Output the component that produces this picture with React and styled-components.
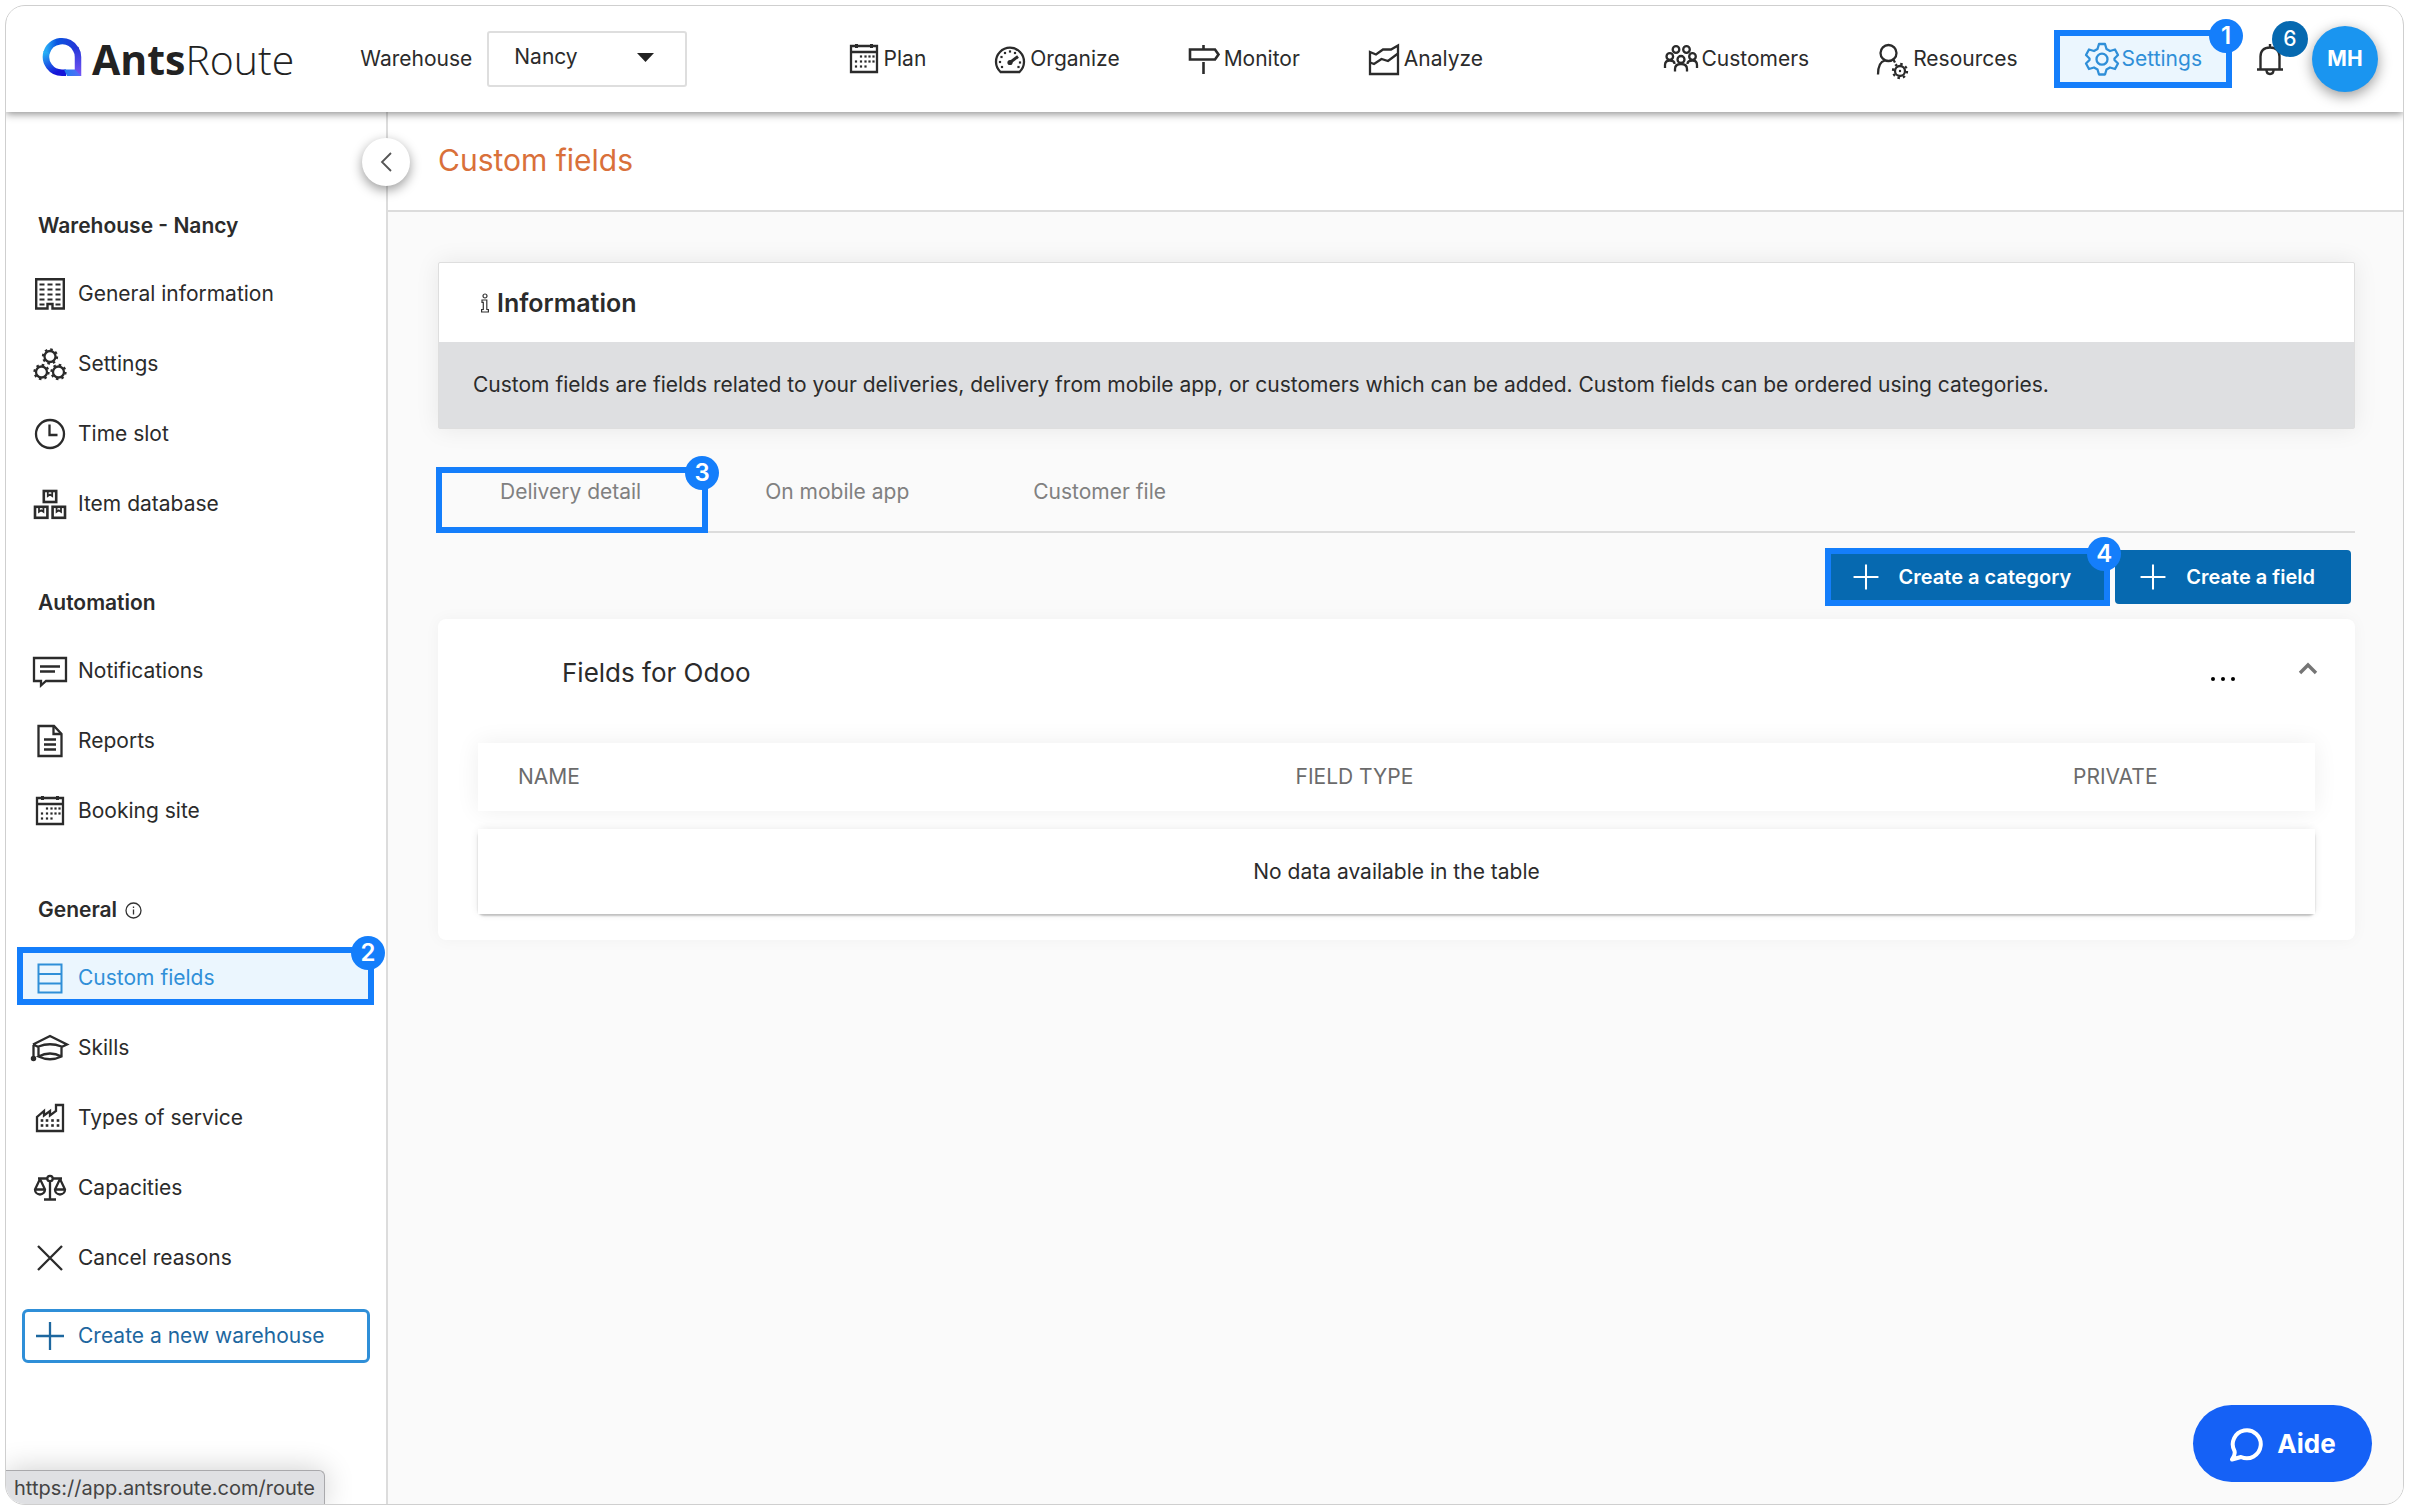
import React from "react";
import styled, { createGlobalStyle, css } from "styled-components";

const colors = {
  ink: "#2b2b2b",
  grey: "#808080",
  line: "#dcdcdc",
  frame: "#cfcfcf",
  step: "#147efb",
  brand: "#0669b0",
  active: "#2f8fd8",
  activeBg: "#ebf6fe",
  avatar: "#1a95f0",
  title: "#d9703a",
};

const GlobalStyle = createGlobalStyle`
  *, *::before, *::after { box-sizing: border-box; }
  body {
    margin: 0;
    background: #fff;
    color: ${colors.ink};
    font-family: Inter, "Open Sans", sans-serif;
    font-size: 21px;
    line-height: 28px;
  }
  button, select { font: inherit; color: inherit; }
  a { color: inherit; text-decoration: none; }
  h1, h2, p, ul { margin: 0; padding: 0; }
`;

/* ---------- Frame ---------- */

const Frame = styled.div`
  position: relative;
  display: flex;
  flex-direction: column;
  min-height: calc(100vh - 10px);
  margin: 5px;
  border: 1px solid ${colors.frame};
  border-radius: 20px;
  overflow: hidden;
`;

const Body = styled.div`
  display: flex;
  flex: 1;
`;

/* ---------- Step markers ---------- */

const StepAnchor = styled.div`
  position: relative;
`;

const StepOutline = styled.span`
  position: absolute;
  inset: ${(p) => p.$inset || "0"};
  border: 6px solid ${colors.step};
  pointer-events: none;
`;

const StepBadge = styled.span`
  position: absolute;
  top: -17px;
  right: -17px;
  display: flex;
  align-items: center;
  justify-content: center;
  width: 34px;
  height: 34px;
  border-radius: 50%;
  background: ${colors.step};
  color: #fff;
  font-size: 24px;
  font-weight: 600;
`;

const Step = ({ number, inset }) => (
  <StepOutline $inset={inset}>
    <StepBadge>{number}</StepBadge>
  </StepOutline>
);

/* ---------- Icons ---------- */

const Svg = styled.svg`
  flex: none;
  width: 36px;
  height: 36px;
  overflow: visible;
  fill: none;
  stroke: currentColor;
  stroke-width: ${(p) => p.$weight || 2.3};
`;

const Icon = ({ children, weight }) => (
  <Svg viewBox="0 0 36 36" $weight={weight} aria-hidden="true">
    {children}
  </Svg>
);

const Dots = ({ points, size = 2.2 }) =>
  points.map(([x, y]) => (
    <rect key={`${x}-${y}`} x={x - size / 2} y={y - size / 2} width={size} height={size} fill="currentColor" stroke="none" />
  ));

const CalendarIcon = () => (
  <Icon>
    <path d="M5 5H31V31H5ZM5 11H31" />
    <path d="M10.5 3V7M25.5 3V7" strokeWidth="3" />
    <Dots
      points={[
        [15, 15.5], [19.5, 15.5], [23.5, 15.5], [27.5, 15.5],
        [10, 20.5], [15, 20.5], [19.5, 20.5], [23.5, 20.5], [27.5, 20.5],
        [10, 25.5], [15, 25.5], [19.5, 25.5],
      ]}
    />
  </Icon>
);

const GaugeIcon = () => (
  <Icon>
    <path d="M8.500 31H27.500A14 14 0 1 0 8.500 31Z" />
    <circle cx="18" cy="21.500" r="2.600" fill="currentColor" stroke="none" />
    <path d="M18 21.500L26 15.500" strokeWidth="3" />
    <Dots points={[[8, 21], [9.5, 16], [13, 12], [18, 10.500], [23, 12], [28, 21.500], [10, 26], [26.500, 26]]} />
  </Icon>
);

const SignpostIcon = () => (
  <Icon weight={2.6}>
    <path d="M4 8.500H29L32.500 13.500L29 18.500H4ZM17.500 4V8.500M17.500 21V33" />
  </Icon>
);

const AreaChartIcon = () => (
  <Icon>
    <path d="M4 11L10 13.500L17 8.500H25L32 4.500V33H4Z" />
    <path d="M4 21.500L8 23L15.500 18L22 20L32 12.500" />
  </Icon>
);

const PeopleIcon = () => (
  <Icon>
    <circle cx="13" cy="8.500" r="3.300" />
    <circle cx="23.500" cy="8.500" r="3.300" />
    <circle cx="6.800" cy="15.500" r="3.300" />
    <circle cx="18" cy="18.500" r="3.500" />
    <circle cx="29.500" cy="15.500" r="3.300" />
    <path d="M2 27V24Q2 19.500 6.800 19.500Q11.500 19.500 11.500 23M34 27V24Q34 19.500 29.500 19.500Q24.500 19.500 24.500 23M12 30.500V28Q12 23 18 23Q24 23 24 28V30.500" />
  </Icon>
);

const PersonGearIcon = () => (
  <Icon>
    <circle cx="13.500" cy="12" r="8" />
    <path d="M3 33.500Q3 21 10 19.500M18 18L20 21.500" />
    <circle cx="25" cy="30" r="5" />
    <circle cx="25" cy="30" r="7" strokeDasharray="2.5 3" />
    <circle cx="25" cy="30" r="1.200" fill="currentColor" stroke="none" />
  </Icon>
);

const CogIcon = () => (
  <Icon>
    <path
      strokeLinejoin="round"
      d="M15 3H21L22.500 8L26 10L31 8.500L34 14L30.500 17.500V19L34 22.500L31 28L26 26.500L22.500 28.500L21 33.500H15L13.500 28.500L10 26.500L5 28L2 22.500L5.500 19V17.500L2 14L5 8.500L10 10L13.500 8Z"
    />
    <circle cx="18" cy="18.200" r="5.500" />
  </Icon>
);

const BellIcon = () => (
  <Icon weight={2.4}>
    <path d="M5 28.500H31M8.500 28V15.500Q8.500 6.500 18 6.500Q27.500 6.500 27.500 15.500V28M18 6.500V3" />
    <path d="M14.500 29Q14.500 33 18 33Q21.500 33 21.500 29" />
  </Icon>
);

const BuildingIcon = () => (
  <Icon weight={2.4}>
    <path d="M4.200 3.200H31.800V32.500H20.500V28H15.500V32.500H4.200Z" />
    <path
      strokeWidth="2"
      d="M7.500 8.500H12.500M15.500 8.500H20.500M23.500 8.500H28.500M7.500 13.500H12.500M15.500 13.500H20.500M23.500 13.500H28.500M7.500 18.500H12.500M15.500 18.500H20.500M23.500 18.500H28.500M7.500 23.500H12.500M15.500 23.500H20.500M23.500 23.500H28.500M7.500 28.500H12.500M23.500 28.500H28.500"
    />
  </Icon>
);

const Gear = ({ x, y }) => (
  <>
    <circle cx={x} cy={y} r="5.500" />
    <circle cx={x} cy={y} r="7" strokeDasharray="2.5 3" />
  </>
);

const GearsIcon = () => (
  <Icon>
    <Gear x={18} y={10.5} />
    <Gear x={9.5} y={26} />
    <Gear x={26.5} y={26} />
  </Icon>
);

const ClockIcon = () => (
  <Icon>
    <circle cx="18" cy="18" r="14" />
    <path d="M17.500 8.500V19H25.500" />
  </Icon>
);

const Crate = ({ x, y }) => (
  <>
    <rect x={x} y={y} width="12.400" height="11" strokeWidth="2.600" />
    <path d={`M${x + 4} ${y}V${y + 5}L${x + 6.2} ${y + 3.5}L${x + 8.4} ${y + 5}V${y}`} strokeWidth="1.800" />
  </>
);

const CratesIcon = () => (
  <Icon>
    <Crate x={11.8} y={5} />
    <Crate x={3} y={20.8} />
    <Crate x={20.6} y={20.8} />
  </Icon>
);

const MessageIcon = () => (
  <Icon>
    <path d="M2 5H34V28H14L9 32.500V28H2Z" />
    <path d="M8 13.500H28M8 18.500H23" />
  </Icon>
);

const ReportIcon = () => (
  <Icon>
    <path d="M6.500 3H22L29.500 11V33H6.500Z" />
    <path d="M21.500 3V11H29.500M12 16.500H24M12 21.500H24M12 26.500H24" />
  </Icon>
);

const FieldsIcon = () => (
  <Icon weight={2}>
    <path d="M6.500 4.500H29.500V32.500H6.500ZM6.500 14H29.500M6.500 23.500H29.500" />
  </Icon>
);

const CapIcon = () => (
  <Icon>
    <path d="M1 14.500L18 6L35 14.500L29.500 17M6.500 17L1 14.500M6.500 26.500V16.500Q18 12 29.500 16.500V26.500Q18 32 6.500 26.500Q18 20.500 29.500 26.500M1.500 15V28" />
    <circle cx="1.500" cy="28.500" r="1.600" fill="currentColor" />
  </Icon>
);

const FactoryIcon = () => (
  <Icon>
    <path d="M5 31V17L12 11V15.500L18 11V15.500L24 11V5H31V31Z" />
    <Dots
      points={[
        [10, 20.5], [15, 20.5], [20.5, 20.5], [26, 20.5],
        [10, 25.5], [15, 25.5], [20.500, 25.5], [26, 25.5],
      ]}
      size={2.6}
    />
  </Icon>
);

const ScalesIcon = () => (
  <Icon>
    <path d="M6 8.500H15M21 8.500H30M18 11.500V29.500M12 29.500H24" />
    <circle cx="18" cy="8.500" r="2.700" />
    <path d="M8 9L3 19.500A5 5 0 0 0 13 19.500L8 9M28 9L23 19.500A5 5 0 0 0 33 19.500L28 9M3 19.500H13M23 19.500H33" />
  </Icon>
);

const CrossIcon = () => (
  <Icon>
    <path d="M6 6L30 30M30 6L6 30" />
  </Icon>
);

const PlusIcon = () => (
  <Icon>
    <path d="M4 18H32M18 4V32" />
  </Icon>
);

/* ---------- Header ---------- */

const TopBar = styled.header`
  position: relative;
  z-index: 2;
  display: flex;
  align-items: center;
  justify-content: space-between;
  height: 106px;
  padding: 0 25px 0 36px;
  background: #fff;
  box-shadow: 0 2px 8px rgba(0, 0, 0, 0.45);
`;

const TopGroup = styled.div`
  display: flex;
  align-items: center;
`;

const Logo = styled.a`
  display: flex;
  align-items: center;
  gap: 10px;
  margin-right: 66px;
  color: #222;
  font-family: "Open Sans", "Noto Sans", sans-serif;
  font-size: 41px;
  font-weight: 300;
  line-height: 56px;

  svg {
    width: 40px;
    height: 40px;
    margin-bottom: 4px;
  }

  strong {
    font-weight: 700;
  }
`;

const WarehouseLabel = styled.label`
  margin-right: 15px;
`;

const SelectBox = styled.div`
  position: relative;

  select {
    width: 200px;
    height: 56px;
    padding: 0 25px 4px;
    border: 2px solid #dedede;
    border-radius: 3px;
    background: #fff;
    appearance: none;
  }

  svg {
    position: absolute;
    top: 22px;
    right: 33px;
    pointer-events: none;
  }
`;

const Nav = styled.nav`
  display: flex;
  gap: 6px;
`;

const CenterNav = styled(Nav)`
  margin-left: 8px;
`;

const NavLink = styled.a`
  position: relative;
  display: flex;
  align-items: center;
  gap: 2px;
  height: 58px;
  padding: 0 30px;
  ${(p) =>
    p.$active &&
    css`
      background: ${colors.activeBg};
      color: ${colors.active};
    `}
`;

const BellButton = styled.button`
  position: relative;
  display: flex;
  margin: 0 24px 0 20px;
  padding: 0;
  border: 0;
  background: none;
`;

const Count = styled.span`
  position: absolute;
  top: -20px;
  right: -20px;
  width: 36px;
  height: 36px;
  border-radius: 50%;
  background: ${colors.brand};
  color: #fff;
  font-weight: 500;
  line-height: 36px;
  text-align: center;
`;

const Avatar = styled.button`
  width: 66px;
  height: 66px;
  padding: 0;
  border: 0;
  border-radius: 50%;
  background: ${colors.avatar};
  box-shadow: 0 4px 14px rgba(0, 0, 0, 0.4);
  color: #fff;
  font-weight: 700;
`;

/* ---------- Sidebar ---------- */

const Sidebar = styled.aside`
  position: relative;
  flex: none;
  width: 382px;
  padding: 81px 16px 110px;
  border-right: 2px solid ${colors.line};
  background: #fff;
`;

const Collapse = styled.button`
  position: absolute;
  z-index: 1;
  top: 26px;
  right: -24px;
  display: flex;
  align-items: center;
  justify-content: center;
  width: 48px;
  height: 48px;
  padding: 0;
  border: 0;
  border-radius: 50%;
  background: #fff;
  box-shadow: 0 4px 12px rgba(0, 0, 0, 0.4);
`;

const Section = styled.section`
  & + & {
    margin-top: 31px;
  }
`;

const SectionTitle = styled.h2`
  display: flex;
  align-items: center;
  gap: 8px;
  height: 66px;
  padding-left: 16px;
  font-size: 21px;
  font-weight: 600;
  line-height: 28px;
`;

const MenuList = styled.ul`
  list-style: none;
`;

const MenuRow = styled.li`
  display: flex;
  align-items: center;
  height: 70px;
`;

const MenuLink = styled.a`
  position: relative;
  display: flex;
  flex: 1;
  align-items: center;
  gap: 10px;
  height: 52px;
  padding-left: 10px;
  ${(p) =>
    p.$active &&
    css`
      background: ${colors.activeBg};
      color: ${colors.active};
    `}
`;

const NewWarehouse = styled.button`
  display: flex;
  align-items: center;
  gap: 10px;
  width: 100%;
  height: 54px;
  margin-top: 16px;
  padding: 0 7px;
  border: 3px solid ${colors.active};
  border-radius: 6px;
  background: #fff;
  color: #1d679f;
`;

/* ---------- Main ---------- */

const Main = styled.main`
  flex: 1;
  min-width: 0;
  background: #fafafa;
`;

const PageHead = styled.div`
  display: flex;
  align-items: center;
  height: 100px;
  padding: 0 50px 2px;
  border-bottom: 2px solid ${colors.line};
  background: #fff;
`;

const PageTitle = styled.h1`
  color: ${colors.title};
  font-size: 30px;
  font-weight: 400;
  line-height: 40px;
`;

const Content = styled.div`
  padding: 50px 48px 60px 50px;
`;

const InfoPanel = styled.section`
  border: 1px solid #dedede;
  border-radius: 2px;
  background: #fff;
  box-shadow: 0 0 24px rgba(0, 0, 0, 0.08);

  h2 {
    display: flex;
    align-items: center;
    gap: 8px;
    height: 79px;
    padding-left: 42px;
    font-size: 25px;
    font-weight: 600;
  }

  p {
    padding: 29px 34px;
    background: #dedfe1;
  }
`;

const Tabs = styled.div`
  display: flex;
  height: 82px;
  margin-top: 22px;
  border-bottom: 2px solid ${colors.line};
`;

const Tab = styled.button`
  position: relative;
  height: 82px;
  padding: 0 62px;
  border: 0;
  background: none;
  color: ${colors.grey};
`;

const Actions = styled.div`
  display: flex;
  justify-content: flex-end;
  gap: 8px;
  margin-top: 17px;
  padding-right: 4px;
`;

const ActionButton = styled.button`
  display: flex;
  align-items: center;
  gap: 17px;
  height: 54px;
  padding: 0 36px 0 22px;
  border: 0;
  border-radius: 4px;
  background: ${colors.brand};
  color: #fff;
  font-size: 20px;
  font-weight: 600;

  svg {
    width: 32px;
    height: 32px;
  }
`;

const Card = styled.section`
  margin-top: 15px;
  padding: 0 40px 8px;
  border-radius: 8px;
  background: #fff;
  box-shadow: 0 0 16px rgba(0, 0, 0, 0.04);
`;

const CardHead = styled.div`
  display: flex;
  align-items: center;
  height: 106px;
  padding: 2px 0 0 84px;

  h2 {
    flex: 1;
    font-size: 26px;
    font-weight: 400;
    line-height: 32px;
  }
`;

const CardTools = styled.div`
  display: flex;
  gap: 45px;
  margin-right: -13px;
`;

const IconButton = styled.button`
  display: flex;
  align-items: ${(p) => p.$align};
  justify-content: center;
  width: 40px;
  height: 24px;
  padding: 1px 0 4px;
  border: 0;
  background: none;
`;

const Table = styled.table`
  width: 100%;
  border-spacing: 0 18px;
  table-layout: fixed;

  th {
    height: 68px;
    padding: 0 40px;
    color: #6b6b6b;
    font-weight: 400;
    text-align: left;
  }

  th:last-child {
    width: 282px;
  }

  thead tr {
    box-shadow: 0 0 24px rgba(0, 0, 0, 0.07);
    background: #fff;
  }

  tbody tr {
    border-radius: 6px;
    box-shadow: 0 2px 2px rgba(0, 0, 0, 0.22), 0 0 8px rgba(0, 0, 0, 0.09);
    background: #fff;
  }

  td {
    height: 85px;
    text-align: center;
  }
`;

/* ---------- Overlays ---------- */

const HelpButton = styled.button`
  position: absolute;
  right: 31px;
  bottom: 22px;
  display: flex;
  align-items: center;
  justify-content: center;
  gap: 14px;
  width: 179px;
  height: 77px;
  border: 0;
  border-radius: 39px;
  background: #1561f6;
  color: #fff;
  font-size: 26px;
  font-weight: 700;
`;

const StatusUrl = styled.div`
  position: absolute;
  left: 0;
  bottom: 0;
  width: 319px;
  height: 34px;
  padding-left: 8px;
  border: 1px solid #a9a9ac;
  border-width: 1px 1px 0 0;
  border-radius: 0 6px 0 0;
  background: #dfe0e3;
  box-shadow: 0 0 30px rgba(0, 0, 0, 0.2);
  color: #444;
  font-size: 20px;
  line-height: 34px;
`;

const mainNav = [
  ["Plan", CalendarIcon],
  ["Organize", GaugeIcon],
  ["Monitor", SignpostIcon],
  ["Analyze", AreaChartIcon],
];

const sections = [
  {
    title: "Warehouse - Nancy",
    items: [
      ["General information", BuildingIcon],
      ["Settings", GearsIcon],
      ["Time slot", ClockIcon],
      ["Item database", CratesIcon],
    ],
  },
  {
    title: "Automation",
    items: [
      ["Notifications", MessageIcon],
      ["Reports", ReportIcon],
      ["Booking site", CalendarIcon],
    ],
  },
  {
    title: "General",
    info: true,
    items: [
      ["Custom fields", FieldsIcon],
      ["Skills", CapIcon],
      ["Types of service", FactoryIcon],
      ["Capacities", ScalesIcon],
      ["Cancel reasons", CrossIcon],
    ],
  },
];

const LogoMark = () => (
  <svg viewBox="0 0 40 40" fill="none" strokeWidth="6.5" aria-hidden="true">
    <defs>
      <linearGradient id="markTop" x1="0" y1="0" x2="1" y2="0">
        <stop offset="0" stopColor="#27a8f5" />
        <stop offset="0.35" stopColor="#0b55e0" />
        <stop offset="1" stopColor="#2336d8" />
      </linearGradient>
      <linearGradient id="markRight" gradientUnits="userSpaceOnUse" x1="36" y1="10" x2="36" y2="39">
        <stop offset="0" stopColor="#2336d8" />
        <stop offset="1" stopColor="#7a55f5" />
      </linearGradient>
      <linearGradient id="markLeft" x1="0" y1="0" x2="0.5" y2="1">
        <stop offset="0" stopColor="#27b0f5" />
        <stop offset="1" stopColor="#1515d8" />
      </linearGradient>
      <linearGradient id="markFoot" x1="0" y1="0" x2="1" y2="0">
        <stop offset="0" stopColor="#1d7df0" />
        <stop offset="1" stopColor="#5a6cf8" />
      </linearGradient>
    </defs>
    <path d="M4.500 16A16 16 0 0 1 34 12.500" stroke="url(#markTop)" />
    <path d="M33.500 11.500Q36 15.500 36 20V39" stroke="url(#markRight)" />
    <path d="M4.700 15A16 16 0 0 0 20 35.700H24" stroke="url(#markLeft)" />
    <path d="M22 32.500H33L39.200 39H25Z" fill="url(#markFoot)" />
  </svg>
);

export default function App() {
  return (
    <>
      <GlobalStyle />
      <Frame>
        <TopBar>
          <TopGroup>
            <Logo href="#home">
              <LogoMark />
              <span>
                <strong>Ants</strong>Route
              </span>
            </Logo>
            <WarehouseLabel htmlFor="warehouse">Warehouse</WarehouseLabel>
            <SelectBox>
              <select id="warehouse" defaultValue="Nancy">
                <option>Nancy</option>
              </select>
              <svg width="17" height="9" viewBox="0 0 17 9" aria-hidden="true">
                <path d="M0 0H17L8.500 9Z" fill="#222" />
              </svg>
            </SelectBox>
          </TopGroup>
          <CenterNav>
            {mainNav.map(([label, NavIcon]) => (
              <NavLink key={label} href={`#${label}`}>
                <NavIcon />
                {label}
              </NavLink>
            ))}
          </CenterNav>
          <TopGroup>
            <Nav>
              <NavLink href="#customers">
                <PeopleIcon />
                Customers
              </NavLink>
              <NavLink href="#resources">
                <PersonGearIcon />
                Resources
              </NavLink>
              <NavLink href="#settings" $active>
                <CogIcon />
                Settings
                <Step number="1" />
              </NavLink>
            </Nav>
            <BellButton aria-label="Alerts">
              <BellIcon />
              <Count>6</Count>
            </BellButton>
            <Avatar>MH</Avatar>
          </TopGroup>
        </TopBar>

        <Body>
          <Sidebar>
            <Collapse aria-label="Collapse menu">
              <svg width="12" height="20" viewBox="0 0 12 20" fill="none" stroke="#555" strokeWidth="1.8" aria-hidden="true">
                <path d="M11 1L2 10L11 19" />
              </svg>
            </Collapse>
            {sections.map((section) => (
              <Section key={section.title}>
                <SectionTitle>
                  {section.title}
                  {section.info && (
                    <svg width="17" height="17" viewBox="0 0 17 17" fill="none" stroke="#333" strokeWidth="1.3" aria-hidden="true">
                      <circle cx="8.500" cy="8.500" r="7.500" />
                      <path d="M8.500 7.500V12.500M8.500 4.500V6" />
                    </svg>
                  )}
                </SectionTitle>
                <MenuList>
                  {section.items.map(([label, ItemIcon]) => {
                    const active = label === "Custom fields";
                    return (
                      <MenuRow key={label}>
                        <MenuLink href={`#${label}`} $active={active}>
                          <ItemIcon />
                          {label}
                          {active && <Step number="2" inset="-5px -4px -1px -5px" />}
                        </MenuLink>
                      </MenuRow>
                    );
                  })}
                </MenuList>
              </Section>
            ))}
            <NewWarehouse>
              <PlusIcon />
              Create a new warehouse
            </NewWarehouse>
          </Sidebar>

          <Main>
            <PageHead>
              <PageTitle>Custom fields</PageTitle>
            </PageHead>
            <Content>
              <InfoPanel>
                <h2>
                  <svg width="8" height="20" viewBox="0 0 8 20" fill="none" stroke="#333" strokeWidth="1.2" aria-hidden="true">
                    <circle cx="4" cy="3" r="2" />
                    <path d="M1 7H5.800V16.500H7.400V19H0.600V16.500H2.300V9.300H1Z" />
                  </svg>
                  Information
                </h2>
                <p>
                  Custom fields are fields related to your deliveries, delivery from mobile app, or customers which can
                  be added. Custom fields can be ordered using categories.
                </p>
              </InfoPanel>

              <Tabs role="tablist">
                <Tab role="tab" aria-selected="true">
                  Delivery detail
                  <Step number="3" inset="16px -5px 0 -2px" />
                </Tab>
                <Tab role="tab">On mobile app</Tab>
                <Tab role="tab">Customer file</Tab>
              </Tabs>

              <Actions>
                <StepAnchor>
                  <ActionButton>
                    <PlusIcon />
                    Create a category
                  </ActionButton>
                  <Step number="4" inset="-2px -3px" />
                </StepAnchor>
                <ActionButton>
                  <PlusIcon />
                  Create a field
                </ActionButton>
              </Actions>

              <Card>
                <CardHead>
                  <h2>Fields for Odoo</h2>
                  <CardTools>
                    <IconButton aria-label="More actions" $align="flex-end">
                      <svg width="26" height="4" viewBox="0 0 26 4" aria-hidden="true">
                        <circle cx="3" cy="2" r="2" />
                        <circle cx="13" cy="2" r="2" />
                        <circle cx="23" cy="2" r="2" />
                      </svg>
                    </IconButton>
                    <IconButton aria-label="Collapse category" $align="flex-start">
                      <svg width="20" height="13" viewBox="0 0 20 13" fill="none" stroke="#757575" strokeWidth="3.4" aria-hidden="true">
                        <path d="M2 11L10 3L18 11" />
                      </svg>
                    </IconButton>
                  </CardTools>
                </CardHead>
                <Table>
                  <thead>
                    <tr>
                      <th>NAME</th>
                      <th>FIELD TYPE</th>
                      <th>PRIVATE</th>
                    </tr>
                  </thead>
                  <tbody>
                    <tr>
                      <td colSpan={3}>No data available in the table</td>
                    </tr>
                  </tbody>
                </Table>
              </Card>
            </Content>
          </Main>
        </Body>

        <HelpButton>
          <svg width="34" height="36" viewBox="0 0 34 36" fill="none" stroke="#fff" strokeWidth="4" strokeLinejoin="round" aria-hidden="true">
            <path d="M5.500 25A14 14 0 1 1 12 31L3 33.500Q6.500 29 5.500 25Z" />
          </svg>
          Aide
        </HelpButton>
        <StatusUrl>https://app.antsroute.com/route</StatusUrl>
      </Frame>
    </>
  );
}
